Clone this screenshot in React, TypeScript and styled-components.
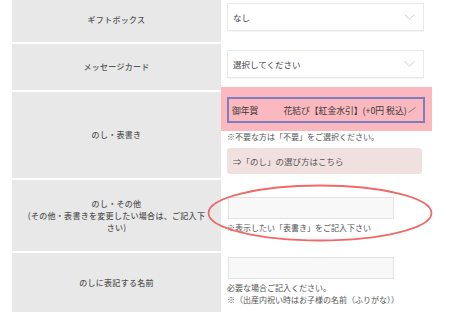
import styled, { createGlobalStyle } from 'styled-components';

const GlobalStyle = createGlobalStyle`
  html, body {
    margin: 0;
    padding: 0;
    background: #fff;
    overflow: hidden;
  }
  body {
    font-family: "Noto Sans CJK JP", "Noto Sans", sans-serif;
    color: #444;
  }
`;

const Table = styled.div`
  margin-top: -3px;
  padding-left: 12px;
  width: 438px;
  display: flex;
  flex-direction: column;
  gap: 2px;
`;

const Row = styled.div<{ h: number }>`
  position: relative;
  display: grid;
  grid-template-columns: 209px 1fr;
  height: ${({ h }) => h}px;
`;

const Label = styled.div`
  background: #e8e8e8;
  display: flex;
  align-items: center;
  justify-content: center;
  text-align: center;
  font-size: 8px;
  line-height: 12px;
  font-weight: 500;
  color: #555;
  padding: 0 14px;
  letter-spacing: 0.3px;
`;

const Cell = styled.div<{ top: number }>`
  display: flex;
  flex-direction: column;
  align-items: flex-start;
  padding-top: ${({ top }) => top}px;
  padding-left: 6px;
`;

const Select = styled.div`
  box-sizing: border-box;
  width: 197px;
  height: 28px;
  border: 1px solid #e9e9e9;
  box-shadow: 0 1px 1px rgba(0, 0, 0, 0.04);
  background: #fff;
  display: flex;
  align-items: center;
  justify-content: space-between;
  padding: 0 8px 0 5px;
  font-size: 8.5px;
  color: #444;
`;

const Chevron = () => (
  <svg width="11" height="6" viewBox="0 0 11 6">
    <path d="M0.5 0.5 L5.5 5 L10.5 0.5" fill="none" stroke="#c8c8c8" strokeWidth="0.9" />
  </svg>
);

const Highlight = styled.div`
  box-sizing: border-box;
  margin: -5px 0 0 -6px;
  width: 211px;
  padding: 10px 7px 8px 6px;
  background: #fbb8be;
`;

const PickedSelect = styled.div`
  box-sizing: border-box;
  width: 198px;
  height: 26px;
  border: 2px solid #7b7dbf;
  display: flex;
  align-items: center;
  padding-left: 3px;
  font-size: 8.8px;
  color: #3a3a3a;
  white-space: nowrap;
  overflow: hidden;
`;

const Gap = styled.span`
  display: inline-block;
  width: 25px;
`;

const Tick = styled.svg`
  flex: none;
  margin-left: 1px;
`;

const Note = styled.div`
  font-size: 8px;
  line-height: 12px;
  color: #555;
  white-space: nowrap;
`;

const Guide = styled.div`
  box-sizing: border-box;
  margin-top: 5px;
  width: 195px;
  height: 26px;
  border-radius: 3px;
  background: #f1e0e0;
  display: flex;
  align-items: center;
  padding-left: 6px;
  font-size: 8.5px;
  color: #555;
`;

const Input = styled.div<{ h: number }>`
  box-sizing: border-box;
  width: 166px;
  height: ${({ h }) => h}px;
  margin-left: 1px;
  border: 1px solid #e2e2e2;
  background: #f8f8f8;
  margin-bottom: 3px;
`;

const Mark = styled.svg`
  position: absolute;
  left: 195px;
  top: 4px;
  pointer-events: none;
`;

export default function App() {
  return (
    <>
      <GlobalStyle />
      <Table>
        <Row h={45}>
          <Label>ギフトボックス</Label>
          <Cell top={6}>
            <Select>
              なし
              <Chevron />
            </Select>
          </Cell>
        </Row>
        <Row h={46}>
          <Label>メッセージカード</Label>
          <Cell top={6}>
            <Select>
              選択してください
              <Chevron />
            </Select>
          </Cell>
        </Row>
        <Row h={86}>
          <Label>のし・表書き</Label>
          <Cell top={0}>
            <Highlight>
              <PickedSelect>
                御年賀<Gap />花結び【紅金水引】(+0円 税込)
                <Tick width="8" height="6" viewBox="0 0 8 6">
                  <path d="M0.5 5.5 L7.5 0.5" fill="none" stroke="#777" strokeWidth="0.9" />
                </Tick>
              </PickedSelect>
            </Highlight>
            <Note>※不要な方は「不要」をご選択ください。</Note>
            <Guide>⇒「のし」の選び方はこちら</Guide>
          </Cell>
        </Row>
        <Row h={71}>
          <Label>
            のし・その他
            <br />
            (その他・表書きを変更したい場合は、ご記入下さい)
          </Label>
          <Cell top={17}>
            <Input h={22} />
            <Note>※表示したい「表書き」をご記入下さい</Note>
          </Cell>
          <Mark width="226" height="58" viewBox="0 0 226 58">
            <ellipse cx="113" cy="29" rx="111.5" ry="27.5" fill="none" stroke="#f06868" strokeWidth="1.8" />
          </Mark>
        </Row>
        <Row h={59}>
          <Label>のしに表記する名前</Label>
          <Cell top={4}>
            <Input h={22} />
            <Note>必要な場合ご記入ください。</Note>
            <Note>※（出産内祝い時はお子様の名前（ふりがな））</Note>
          </Cell>
        </Row>
      </Table>
    </>
  );
}
